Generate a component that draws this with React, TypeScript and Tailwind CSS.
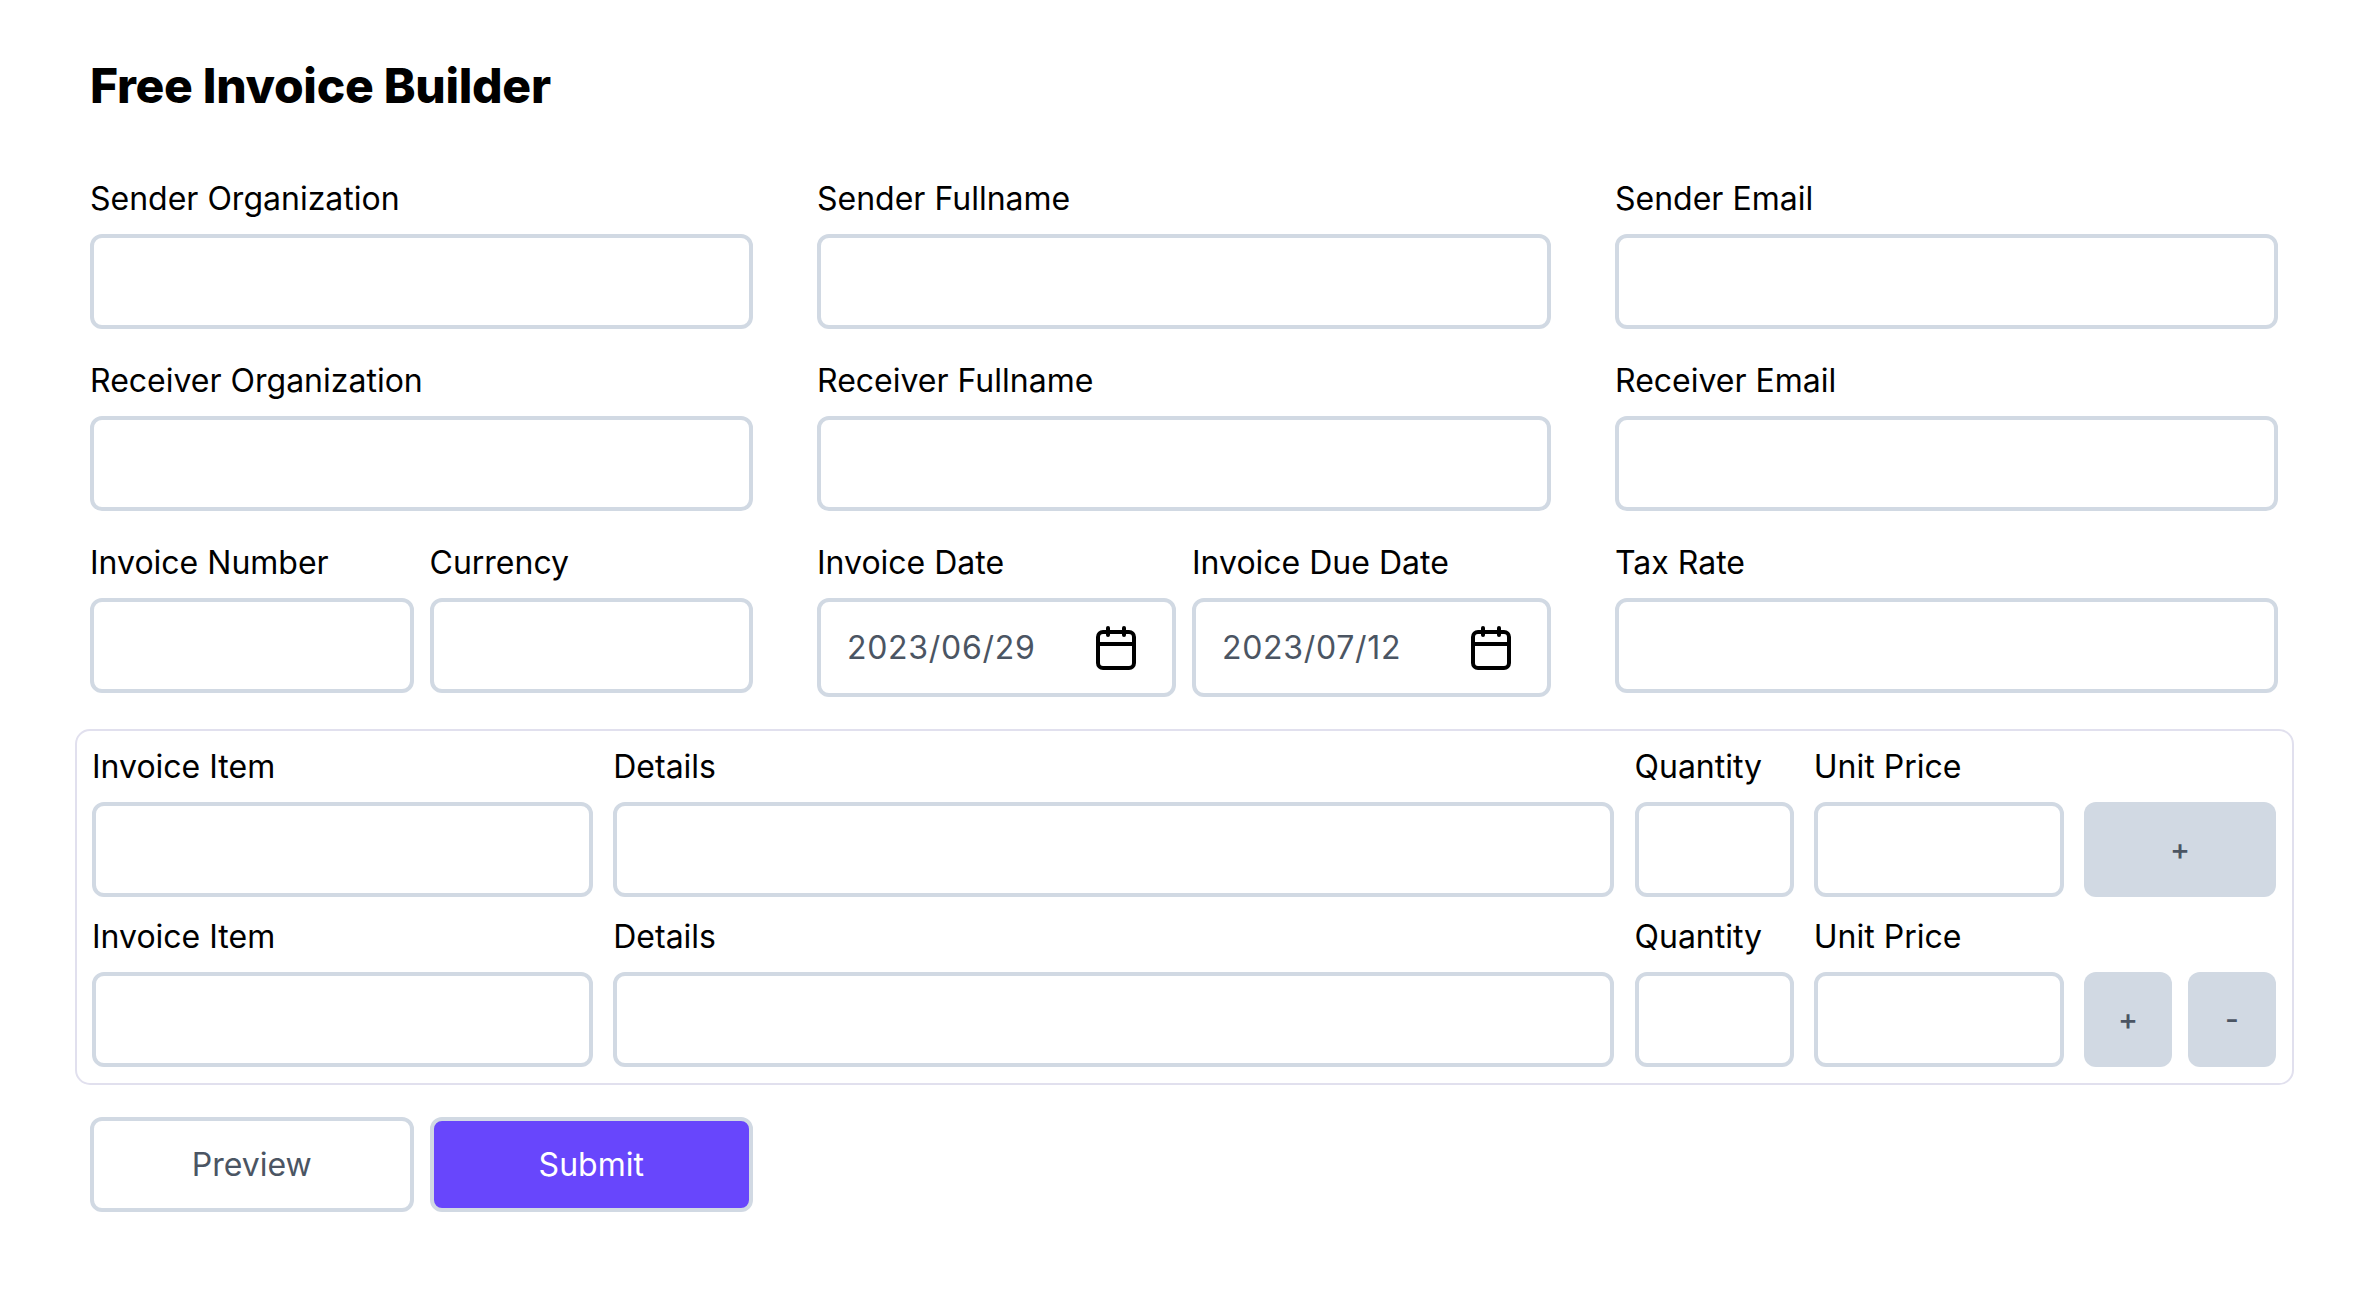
const inputClass =
  "block w-full h-[95px] rounded-[12px] border-4 border-[#d1d9e3] bg-white outline-none";

function Field({ label, className = "" }: { label: string; className?: string }) {
  return (
    <div className={className}>
      <label className="block h-[40px] mb-[16px] text-[32px] leading-[42px] text-black">{label}</label>
      <input type="text" className={inputClass} />
    </div>
  );
}

function CalendarIcon() {
  return (
    <svg width="40" height="44" viewBox="0 0 40 44" fill="none" stroke="#000" strokeWidth="4" strokeLinecap="round">
      <rect x="2" y="6" width="36" height="36" rx="5" />
      <path d="M2 18H38" />
      <path d="M12 2V9" />
      <path d="M28 2V9" />
    </svg>
  );
}

function DateField({ label, value }: { label: string; value: string }) {
  return (
    <div>
      <label className="block h-[40px] mb-[16px] text-[32px] leading-[42px] text-black">{label}</label>
      <div className="flex h-[99px] items-center justify-between rounded-[12px] border-4 border-[#d1d9e3] bg-white pl-[26px] pr-[36px]">
        <span className="text-[32px] tracking-[0.7px] text-[#4b5563]">{value}</span>
        <CalendarIcon />
      </div>
    </div>
  );
}

function ItemRow({ canRemove }: { canRemove?: boolean }) {
  return (
    <div className="grid grid-cols-[501px_1001px_159px_250px_192px] gap-x-[20.25px]">
      <Field label="Invoice Item" />
      <Field label="Details" />
      <Field label="Quantity" />
      <Field label="Unit Price" />
      <div className="flex gap-x-[16px] pt-[56px]">
        <button className="flex-1 h-[95px] rounded-[12px] bg-[#d1d9e3] text-[30px] font-medium text-[#4b5563]">+</button>
        {canRemove && (
          <button className="flex-1 h-[95px] rounded-[12px] bg-[#d1d9e3] text-[30px] font-medium text-[#4b5563]">-</button>
        )}
      </div>
    </div>
  );
}

export default function App() {
  return (
    <div className="min-h-[1294px] bg-white px-[90px] pt-[52px] font-['Inter',sans-serif]">
      <h1 className="h-[66px] text-[48px] font-extrabold tracking-[-0.3px] leading-[68px] text-black">Free Invoice Builder</h1>

      <div className="mt-[60px] grid grid-cols-[663px_734px_663px] gap-x-[64px] gap-y-[31px]">
        <Field label="Sender Organization" />
        <Field label="Sender Fullname" />
        <Field label="Sender Email" />
        <Field label="Receiver Organization" />
        <Field label="Receiver Fullname" />
        <Field label="Receiver Email" />
        <div className="grid grid-cols-2 gap-x-[16px]">
          <Field label="Invoice Number" />
          <Field label="Currency" />
        </div>
        <div className="grid grid-cols-2 gap-x-[16px]">
          <DateField label="Invoice Date" value="2023/06/29" />
          <DateField label="Invoice Due Date" value="2023/07/12" />
        </div>
        <Field label="Tax Rate" />
      </div>

      <div className="-mx-[15px] mt-[32px] flex w-[2219px] flex-col gap-y-[19px] rounded-[15px] border-2 border-[#e1e0ee] pl-[15px] pt-[15px] pb-[16px]">
        <ItemRow />
        <ItemRow canRemove />
      </div>

      <div className="mt-[32px] grid w-[663px] grid-cols-2 gap-x-[16px]">
        <button className="h-[95px] rounded-[12px] border-4 border-[#d1d9e3] bg-white text-[32px] text-[#4b5563]">Preview</button>
        <button className="h-[95px] rounded-[12px] border-4 border-[#d1d9e3] bg-[#6846fc] text-[32px] text-white">Submit</button>
      </div>
    </div>
  );
}
